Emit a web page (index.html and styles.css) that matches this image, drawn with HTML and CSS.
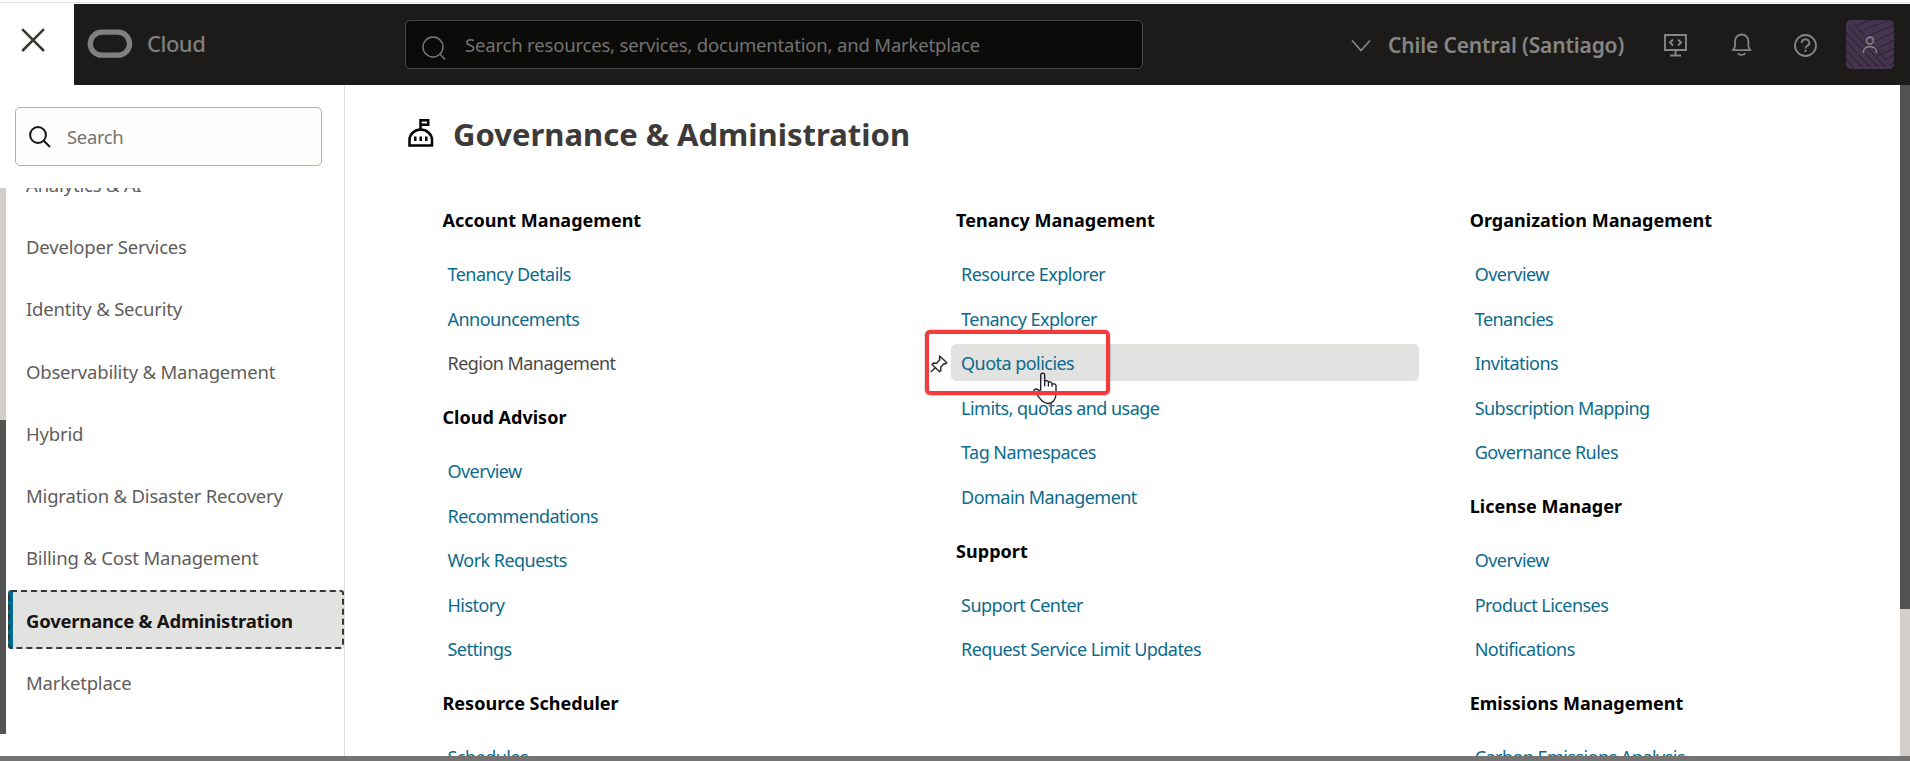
FILE: index.html
```
<!DOCTYPE html>
<html lang="en">
<head>
<meta charset="utf-8">
<title>Governance &amp; Administration</title>
<link rel="stylesheet" href="styles.css">
</head>
<body>
<div class="app">
  <header class="topbar">
    <button class="close" aria-label="Close"><svg width="26" height="26" viewBox="0 0 26 26"><path d="M2.200 2.200 24 24M24 2.200 2.200 24" fill="none" stroke="#3a3632" stroke-width="2.500"/></svg></button>
    <div class="bar">
      <svg class="logo" width="46" height="30" viewBox="0 0 46 30"><rect x="3.250" y="3.150" width="39.300" height="23" rx="11.500" fill="none" stroke="#808080" stroke-width="5.300"/></svg>
      <span class="brand">Cloud</span>
      <div class="gsearch">
        <svg width="24" height="24" viewBox="0 0 24 24" fill="none" stroke="#7a7a79" stroke-width="1.400"><circle cx="11" cy="11" r="10"/><path d="m17.800 18 5.400 5.400"/></svg>
        <span class="t-gsearch">Search resources, services, documentation, and Marketplace</span>
      </div>
      <div class="tools">
        <svg class="chev" width="20" height="14" viewBox="0 0 20 14"><path d="m1 1.500 9 10L19 1.500" fill="none" stroke="#858584" stroke-width="1.700"/></svg>
        <span class="region">Chile Central (Santiago)</span>
        <svg class="dev" width="24" height="24" viewBox="0 0 24 24" fill="none" stroke="#858584" stroke-width="1.900"><path d="M1 2h21v15H1zM11.500 17v5M6 22.500h11M9 6.500 6 9.500l3 3M14 6.500l3 3-3 3"/></svg>
        <svg class="bell" width="22" height="24" viewBox="0 0 22 24" fill="none" stroke="#858584" stroke-width="1.800"><path d="M1 17.200h19.200M2.700 17 4 13V8.200a6.700 6.700 0 0 1 13.400 0V13l1.300 4M7 20.200c1 2.300 6.200 2.300 7.200 0"/></svg>
        <svg class="help" width="24" height="24" viewBox="0 0 24 24" fill="none" stroke="#858584" stroke-width="1.800"><circle cx="11.500" cy="12.500" r="10.500"/><path d="M7.700 10a3.800 3.500 0 1 1 5.700 2.800c-1.300.8-1.900 1.100-1.900 2.600M11.500 16.800v2.200"/></svg>
        <div class="avatar"><svg width="48" height="49" viewBox="0 0 48 49" fill="none"><g stroke="#33283a" stroke-width="1.300"><path d="M2 6 40 48M-2 10 33 48M-2 19 25 48M-2 28 17 48M-2 37 8 48M8 4l32 36M10 6 32-3M13 12 48-2M18 18 48 5M23 24 48 12M28 30 48 20M32 36l16-8M38 40l10-5M44 46l4-4"/></g><g stroke="#85808a" stroke-width="1.600"><circle cx="24" cy="20.500" r="3.400"/><path d="M17.500 33v-1.500c0-6.500 13-6.500 13 0V33"/></g></svg></div>
      </div>
    </div>
  </header>
  <main class="panel">
    <aside class="side">
      <div class="ssearch">
        <svg width="22" height="22" viewBox="0 0 22 22" fill="none" stroke="#161513" stroke-width="2"><circle cx="9" cy="9" r="7.900"/><path d="m14.500 14.500 6.500 6.500"/></svg>
        <span class="t-ssearch">Search</span>
      </div>
      <div class="navwrap">
        <div class="navbar"><div class="navthumb"></div></div>
        <nav class="nav">
          <a>Analytics &amp; AI</a>
          <a>Developer Services</a>
          <a>Identity &amp; Security</a>
          <a>Observability &amp; Management</a>
          <a>Hybrid</a>
          <a>Migration &amp; Disaster Recovery</a>
          <a>Billing &amp; Cost Management</a>
          <a class="on">Governance &amp; Administration</a>
          <a>Marketplace</a>
        </nav>
      </div>
    </aside>
    <section class="content">
      <div class="head">
        <svg width="26" height="28" viewBox="0 0 26 28"><path d="M1.500 26.500V21C1.500 15 7 10.500 12.700 10.500S24 15 24 21v5.500zM12.500 10.500V1.300h7.700v4.500h-7" fill="none" stroke="#000" stroke-width="2.500"/><path d="M6 17.500h2.500v4.500H6zM11.500 17.500H14v4.500h-2.500zM17 17.500h2.500v4.500H17z"/></svg>
        <h1>Governance &amp; Administration</h1>
      </div>
      <div class="cols">
        <div class="col">
          <h2>Account Management</h2>
          <ul><li>Tenancy Details</li><li>Announcements</li><li class="plain">Region Management</li></ul>
          <h2>Cloud Advisor</h2>
          <ul><li>Overview</li><li>Recommendations</li><li>Work Requests</li><li>History</li><li>Settings</li></ul>
          <h2>Resource Scheduler</h2>
          <ul><li>Schedules</li></ul>
        </div>
        <div class="col">
          <h2>Tenancy Management</h2>
          <ul><li>Resource Explorer</li><li>Tenancy Explorer</li>
            <li class="hover">Quota policies
              <svg class="pin" width="18" height="18" viewBox="0 0 18 18" fill="none" stroke="#2f2d2b" stroke-width="1.500"><path d="M9.800 1.300 16.700 7.500l-1.200 1.300-1.300-.3-3.500 3.700.2 3-1.300 1.500-7.500-7.200L3.500 8l3 .2 3.300-3.500-.4-1.700zM5.800 12.300.8 17"/></svg>
              <svg class="hand" width="26" height="34" viewBox="0 0 26 34" fill="none" stroke="#15152a" stroke-width="1.300"><path d="M8.700 18.500V3.200a2 2 0 0 1 4 0v11M12.700 10c0-2 3.700-2 3.700.5v4M16.400 11c0-1.500 3.600-1.500 3.600.8v3M20 12.500c.5-1 4-.8 4 1V22c0 6-4 9.500-8 9.500-5 0-7.500-4-14-13 0-2 3.700-2.500 6.700 1.500"/></svg>
              <span class="mark"></span>
            </li>
            <li>Limits, quotas and usage</li><li>Tag Namespaces</li><li>Domain Management</li></ul>
          <h2>Support</h2>
          <ul><li>Support Center</li><li>Request Service Limit Updates</li></ul>
        </div>
        <div class="col">
          <h2>Organization Management</h2>
          <ul><li>Overview</li><li>Tenancies</li><li>Invitations</li><li>Subscription Mapping</li><li>Governance Rules</li></ul>
          <h2>License Manager</h2>
          <ul><li>Overview</li><li>Product Licenses</li><li>Notifications</li></ul>
          <h2>Emissions Management</h2>
          <ul><li>Carbon Emissions Analysis</li></ul>
        </div>
      </div>
    </section>
    <div class="scroll"><div class="thumb"></div></div>
  </main>
  <footer class="foot"></footer>
</div>
</body>
</html>
```
FILE: styles.css
```
* { box-sizing: border-box; }
body { margin: 0; font-family: "Noto Sans", sans-serif; background: #fff; overflow: hidden; }
svg { display: block; flex: none; }
span, h1, h2, li, a { white-space: nowrap; }
.app { display: flex; flex-direction: column; width: 1910px; height: 761px; border-top: 2px solid #fff; }
.topbar { display: flex; height: 83px; border-top: 1px solid #dedede; flex: none; }
.close { width: 74px; border: 0; padding: 24px 0 0 20px; background: #fff; display: flex; align-items: flex-start; }
.bar { flex: 1; margin-top: 1px; background: #1d1b19; display: flex; }
.logo { margin: 25px 0 0 13px; }
.brand { width: 258px; margin: 21px 0 0 14px; font-size: 22px; line-height: 36px; letter-spacing: -0.5px; color: #7f7f7e; font-weight: 500; }
.gsearch { width: 738px; height: 49px; margin-top: 16px; border: 1px solid #484745; border-radius: 5px; background: #0b0b09; display: flex; padding-left: 17px; }
.gsearch svg { margin: 15px 0 0 -1px; }
.t-gsearch { margin-left: 19px; font-size: 18.500px; line-height: 48px; letter-spacing: -0.180px; color: #737271; }
.tools { display: flex; }
.chev { margin: 35px 0 0 208px; }
.region { width: 247px; margin: 22px 0 0 17px; font-size: 21px; line-height: 38px; letter-spacing: -0.170px; font-weight: 600; color: #858584; }
.dev { margin: 29px 0 0 29px; }
.bell { margin: 29px 0 0 43px; }
.help { margin: 29px 0 0 41px; }
.avatar { width: 48px; height: 49px; margin: 16px 0 0 28px; border-radius: 5px; background: #44344d; overflow: hidden; }
.panel { display: flex; height: 671px; flex: none; overflow: hidden; }
.side { width: 345px; border-right: 1px solid #dcdcdc; flex: none; }
.ssearch { width: 307px; height: 59px; margin: 22px 0 0 15px; border: 1px solid #b3b1ad; border-radius: 5px; background: #fdfdfb; display: flex; padding-left: 13px; }
.ssearch svg { margin-top: 18px; }
.t-ssearch { margin-left: 16px; font-size: 18.500px; line-height: 58px; color: #78736e; letter-spacing: -0.350px; }
.navwrap { display: flex; height: 546px; margin-top: 22px; overflow: hidden; }
.navbar { width: 6px; background: #d4cfcb; }
.navthumb { height: 314px; margin-top: 232px; background: #545453; }
.nav { flex: 1; padding-left: 2px; margin-top: -33px; }
.nav a { display: block; height: 59px; margin-bottom: 3.200px; padding-left: 18px; font-size: 18.500px; line-height: 59px; color: #5f5d5b; letter-spacing: -0.190px; }
.nav .on { font-weight: 700; color: #161513; background: linear-gradient(90deg, #006b8f 5px, #e2e2e0 5px) border-box; border: 2px dashed #3a3632; border-radius: 3px; line-height: 57px; padding-left: 16px; letter-spacing: -0.220px; }
.content { flex: 1; min-width: 0; overflow: hidden; }
.head { display: flex; height: 99px; padding: 34px 0 0 63px; }
.head h1 { margin: -8px 0 0 19px; font-size: 31px; line-height: 46px; font-weight: 700; color: #3d3b39; letter-spacing: 0; }
.cols { position: relative; z-index: 0; display: flex; padding-left: 97.500px; }
.col { width: 513.600px; flex: none; }
.col h2 { margin: 22px 0 0; font-size: 18px; line-height: 28px; height: 28px; font-weight: 700; color: #000; letter-spacing: 0.020px; }
.col ul { list-style: none; margin: 22px 0 0; padding: 0 51px 0 0; }
.col li { position: relative; height: 36px; margin-bottom: 8.550px; padding-left: 5px; font-size: 18px; line-height: 36px; color: #0b6b8d; letter-spacing: -0.540px; }
.col .plain { color: #4a4846; }
.col .hover::before { content: ""; position: absolute; z-index: -1; left: -5.100px; right: -0.5px; top: -1px; height: 37px; border-radius: 5px; background: #e2e2e0; }
.pin { position: absolute; left: -26.600px; top: 10px; }
.mark { position: absolute; left: -31px; top: -15px; width: 185px; height: 65px; border: 4px solid #f43b3b; border-radius: 5px; box-shadow: 0 0 2px #888; }
.hand { position: absolute; left: 76px; top: 27px; }
.scroll { width: 10px; flex: none; background: #d4cfcb; }
.thumb { height: 524px; background: #525252; }
.foot { height: 5px; flex: none; background: #757472; }
```
